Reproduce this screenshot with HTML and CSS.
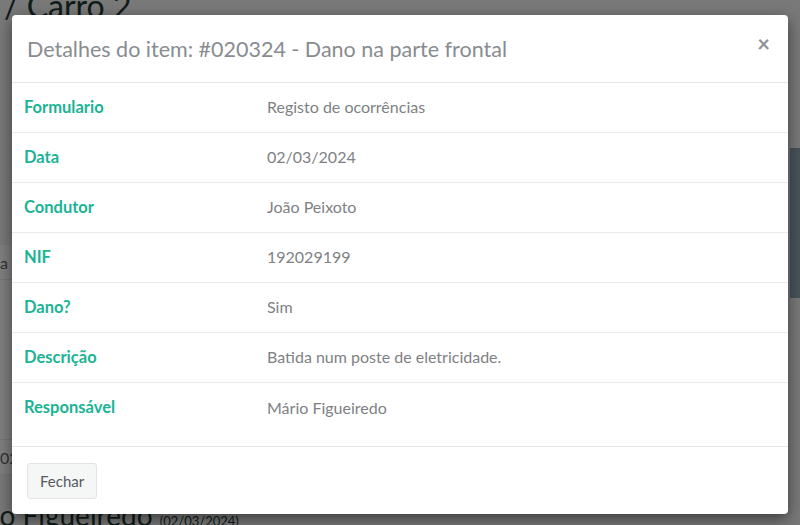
FILE: index.html
```html
<!DOCTYPE html>
<html lang="pt">
<head>
  <meta charset="UTF-8">
  <meta name="viewport" content="width=device-width, initial-scale=1.0">
  <title>Detalhes do item</title>
  <link rel="stylesheet" href="styles.css">
</head>
<body>
  <div class="page">
    <h2 class="page-title">/ Carro 2</h2>
    <div class="page-panel">
      <div class="panel-row">a</div>
      <div class="panel-row panel-row-tall"></div>
      <div class="panel-row">02</div>
    </div>
    <div class="page-side"></div>
    <h2 class="page-sub">Mário Figueiredo <small>(02/03/2024)</small></h2>
  </div>

  <div class="backdrop"></div>

  <div class="modal">
    <div class="modal-header">
      <h4 class="modal-title">Detalhes do item: #020324 - Dano na parte frontal</h4>
      <button class="close">&times;</button>
    </div>

    <div class="modal-body">
      <div class="detail-row">
        <span class="detail-label">Formulario</span>
        <span class="detail-value">Registo de ocorrências</span>
      </div>
      <div class="detail-row">
        <span class="detail-label">Data</span>
        <span class="detail-value">02/03/2024</span>
      </div>
      <div class="detail-row">
        <span class="detail-label">Condutor</span>
        <span class="detail-value">João Peixoto</span>
      </div>
      <div class="detail-row">
        <span class="detail-label">NIF</span>
        <span class="detail-value">192029199</span>
      </div>
      <div class="detail-row">
        <span class="detail-label">Dano?</span>
        <span class="detail-value">Sim</span>
      </div>
      <div class="detail-row">
        <span class="detail-label">Descrição</span>
        <span class="detail-value">Batida num poste de eletricidade.</span>
      </div>
      <div class="detail-row">
        <span class="detail-label">Responsável</span>
        <span class="detail-value">Mário Figueiredo</span>
      </div>
    </div>

    <div class="modal-footer">
      <button class="btn">Fechar</button>
    </div>
  </div>
</body>
</html>
```

FILE: styles.css
```css
* {
  margin: 0;
  padding: 0;
  box-sizing: border-box;
}

body {
  font-family: Lato, "Open Sans", sans-serif;
  background: #f3f3f4;
  color: #676a6c;
  width: 800px;
  height: 525px;
  overflow: hidden;
  position: relative;
}

/* page behind the modal */
.page {
  height: 525px;
  display: flex;
  flex-direction: column;
  justify-content: space-between;
}

.page-title {
  font-size: 32px;
  font-weight: 400;
  color: #1f3b33;
  margin: -14px 0 0 4px;
  line-height: 40px;
}

.page-panel {
  position: absolute;
  left: 0;
  top: 245px;
  width: 320px;
  background: #ffffff;
}

.panel-row {
  height: 35px;
  padding-top: 8px;
  border-bottom: 1px solid #e7eaec;
  font-size: 16px;
  color: #676a6c;
}

.panel-row-tall {
  height: 160px;
}

.page-side {
  position: absolute;
  right: 0;
  top: 148px;
  width: 10px;
  height: 150px;
  background: #8fa7b5;
}

.page-sub {
  font-size: 28px;
  font-weight: 400;
  color: #1f3b33;
  margin: 0 0 -14px -57px;
  line-height: 36px;
}

.page-sub small {
  font-size: 13px;
}

.backdrop {
  position: absolute;
  inset: 0;
  background: rgba(0, 0, 0, 0.5);
}

/* modal */
.modal {
  position: absolute;
  left: 12px;
  top: 15px;
  width: 776px;
  background: #ffffff;
  border-radius: 4px;
  box-shadow: 0 5px 15px rgba(0, 0, 0, 0.5);
}

.modal-header {
  height: 68px;
  padding: 0 16px;
  display: flex;
  align-items: center;
  justify-content: space-between;
  border-bottom: 1px solid #e5e5e5;
}

.modal-title {
  font-size: 21.5px;
  font-weight: 400;
  color: #888c90;
  margin-left: -1px;
}

.close {
  background: none;
  border: none;
  font-family: inherit;
  font-size: 22px;
  font-weight: 700;
  color: #8f9193;
  line-height: 1;
  margin: -10px 2px 0 0;
  cursor: pointer;
}

.modal-body {
  padding-bottom: 13px;
}

.detail-row {
  height: 50px;
  padding: 0 12px 2px;
  display: flex;
  align-items: center;
  border-bottom: 1px solid #e7eaec;
  font-size: 16px;
}

.detail-row:last-child {
  border-bottom: none;
}

.detail-label {
  width: 243px;
  font-size: 16.5px;
  font-weight: 700;
  color: #1ab394;
}

.detail-value {
  color: #7e8184;
}

.modal-footer {
  padding: 16px 15px 15px;
  border-top: 1px solid #e5e5e5;
}

.btn {
  font-family: inherit;
  font-size: 15px;
  color: #555a5e;
  background: #f5f6f6;
  border: 1px solid #e2e4e5;
  border-radius: 3px;
  padding: 0 12px;
  height: 36px;
  cursor: pointer;
}
```
